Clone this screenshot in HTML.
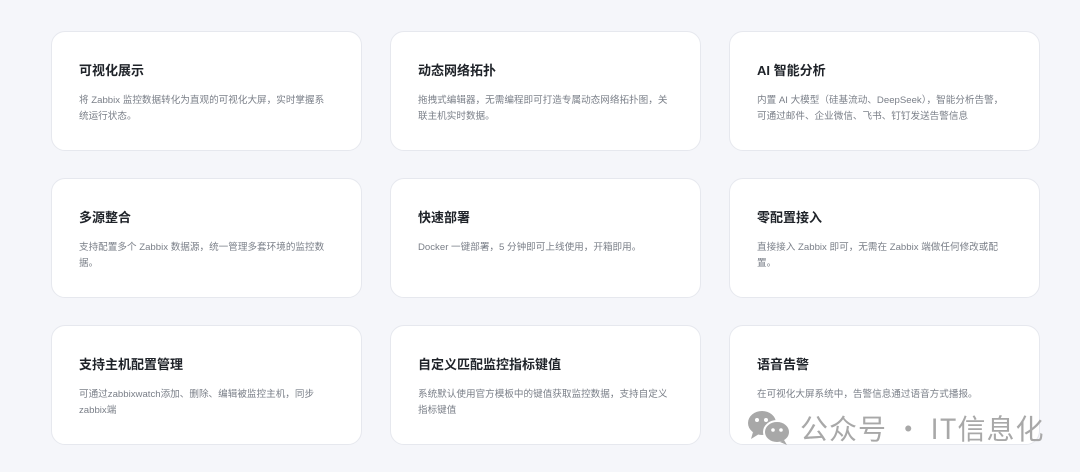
<!DOCTYPE html>
<html><head><meta charset="utf-8"><style>
body{margin:0;width:1080px;height:472px;background:#f5f6fa;font-family:"Liberation Sans","Noto Sans CJK SC",sans-serif;overflow:hidden;position:relative}
.card{position:absolute;width:311px;height:120px;background:#fff;border:1px solid #e6e8ee;border-radius:14px;box-sizing:border-box}
.card h3{position:absolute;left:27px;top:28px;margin:0;font-size:13px;font-weight:bold;color:#1f2329}
.card p{position:absolute;left:27px;top:61px;margin:0;width:250px;font-size:9.6px;line-height:16px;color:#7a7f88}
.wm{position:absolute;left:800px;top:408px;font-size:28px;letter-spacing:1px;color:#a8a8a8;font-family:"Noto Sans CJK SC",sans-serif}
</style></head><body>
<div class="card" style="left:51px;top:31px"><h3>可视化展示</h3><p>将 Zabbix 监控数据转化为直观的可视化大屏，实时掌握系统运行状态。</p></div>
<div class="card" style="left:390px;top:31px"><h3>动态网络拓扑</h3><p>拖拽式编辑器，无需编程即可打造专属动态网络拓扑图，关联主机实时数据。</p></div>
<div class="card" style="left:729px;top:31px"><h3>AI 智能分析</h3><p>内置 AI 大模型（硅基流动、DeepSeek），智能分析告警，可通过邮件、企业微信、飞书、钉钉发送告警信息</p></div>
<div class="card" style="left:51px;top:178px"><h3>多源整合</h3><p>支持配置多个 Zabbix 数据源，统一管理多套环境的监控数据。</p></div>
<div class="card" style="left:390px;top:178px"><h3>快速部署</h3><p>Docker 一键部署，5 分钟即可上线使用，开箱即用。</p></div>
<div class="card" style="left:729px;top:178px"><h3>零配置接入</h3><p>直接接入 Zabbix 即可，无需在 Zabbix 端做任何修改或配置。</p></div>
<div class="card" style="left:51px;top:325px"><h3>支持主机配置管理</h3><p>可通过zabbixwatch添加、删除、编辑被监控主机，同步zabbix端</p></div>
<div class="card" style="left:390px;top:325px"><h3>自定义匹配监控指标键值</h3><p>系统默认使用官方模板中的键值获取监控数据，支持自定义指标键值</p></div>
<div class="card" style="left:729px;top:325px"><h3>语音告警</h3><p>在可视化大屏系统中，告警信息通过语音方式播报。</p></div>
<svg style="position:absolute;left:747px;top:410px" width="46" height="36" viewBox="0 0 46 36">
<ellipse cx="15" cy="13" rx="14" ry="12" fill="#a8a8a8"/><path d="M6 22 L4 29 L12 24Z" fill="#a8a8a8"/>
<ellipse cx="30" cy="22" rx="13" ry="11" fill="#a8a8a8" stroke="#fff" stroke-width="2"/><path d="M37 30 L40 35 L33 32Z" fill="#a8a8a8"/>
<circle cx="10" cy="10" r="2" fill="#fff"/><circle cx="19" cy="10" r="2" fill="#fff"/>
<circle cx="26" cy="20" r="1.8" fill="#fff"/><circle cx="34" cy="20" r="1.8" fill="#fff"/></svg>
<div class="wm">公众号 · IT信息化</div>
</body></html>
